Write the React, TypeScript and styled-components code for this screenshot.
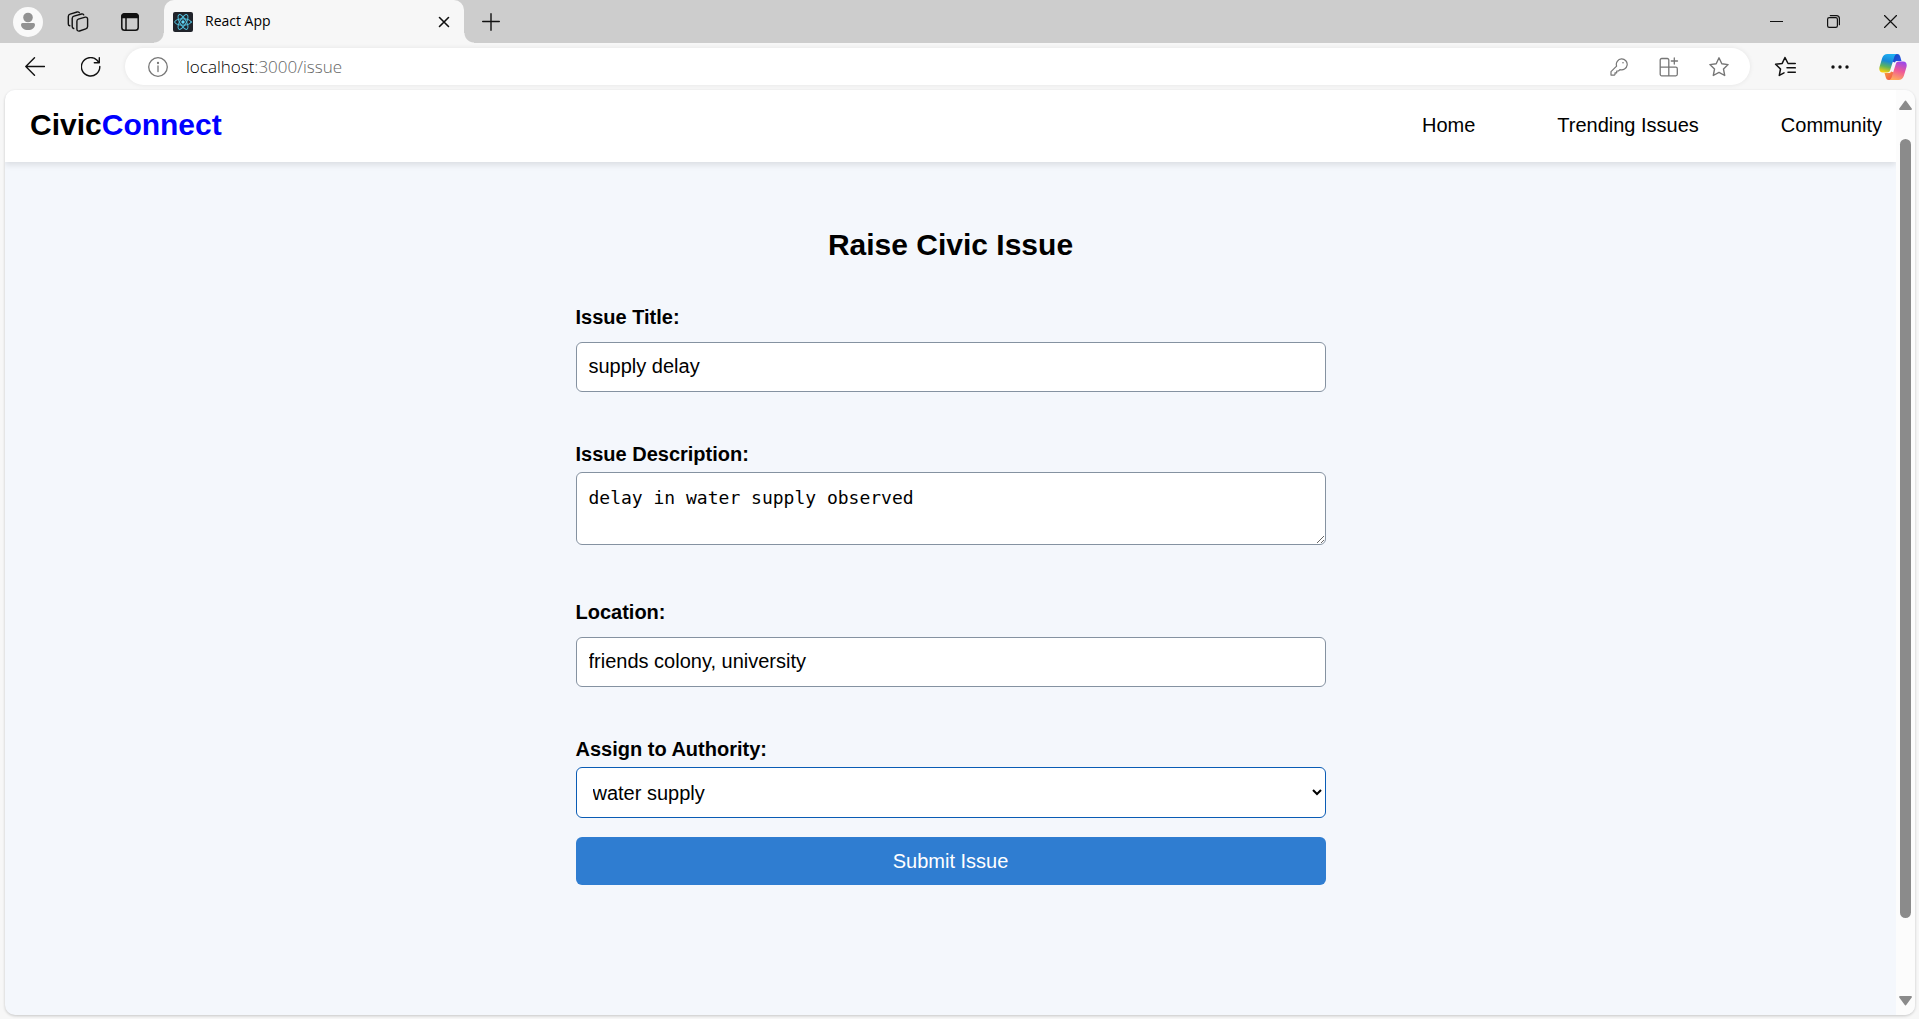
import React, { useState } from "react";
import type { ReactNode } from "react";
import styled, { createGlobalStyle } from "styled-components";

const sans = `"Liberation Sans", Arial, sans-serif`;
const ui = `"Segoe UI", "Open Sans", sans-serif`;

const GlobalStyle = createGlobalStyle`
  *, *::before, *::after { box-sizing: border-box; }
  body { margin: 0; background: #f7f7f7; font-family: ${sans}; color: #000; }
  svg { display: block; }
  button { font: inherit; color: inherit; }
`;

const Window = styled.div`
  display: flex;
  flex-direction: column;
  min-height: 100vh;
  background: #f7f7f7;
`;

const TabStrip = styled.div`
  display: flex;
  align-items: center;
  height: 43px;
  background: #cdcdcd;
`;

const IconButton = styled.button<{ $w: number; $h?: number; $color?: string }>`
  display: flex;
  flex: none;
  align-items: center;
  justify-content: center;
  width: ${(p) => p.$w}px;
  height: ${(p) => p.$h ?? 36}px;
  padding: 0;
  border: 0;
  background: none;
  color: ${(p) => p.$color ?? "#111"};
`;

const StripStart = styled.div`
  display: flex;
  align-items: center;
  width: 164px;
  padding-left: 2px;
`;

const Tab = styled.div`
  position: relative;
  display: flex;
  align-items: center;
  width: 300px;
  height: 43px;
  padding: 0 5px 0 9px;
  border-radius: 10px 10px 0 0;
  background: #f7f7f7;

  &::before,
  &::after {
    content: "";
    position: absolute;
    bottom: 0;
    width: 10px;
    height: 10px;
  }
  &::before {
    right: 100%;
    background: radial-gradient(circle at 0 0, transparent 9px, #f7f7f7 10px);
  }
  &::after {
    left: 100%;
    background: radial-gradient(circle at 100% 0, transparent 9px, #f7f7f7 10px);
  }
`;

const TabTitle = styled.span`
  flex: 1;
  padding: 0 0 2px 12px;
  font: 14px/20px ${ui};
`;

const WindowControls = styled.div`
  display: flex;
  margin-left: auto;
`;

const Toolbar = styled.div`
  display: flex;
  align-items: center;
  height: 47px;
  padding: 0 0 0 7px;
`;

const AddressBar = styled.form`
  display: flex;
  flex: 1;
  align-items: center;
  height: 37px;
  margin: 0 7px;
  padding: 0 6px 0 16px;
  border-radius: 19px;
  background: #fff;
  box-shadow: 0 0 5px rgba(0, 0, 0, 0.08);
`;

const Url = styled.a`
  flex: 1;
  padding-left: 12px;
  color: #666;
  font: 300 17px/24px ${ui};
  text-decoration: none;

  b {
    color: #000;
    font-weight: 300;
  }
`;

const Viewport = styled.div`
  display: flex;
  flex: 1;
  margin: 0 4px 4px 5px;
  border-radius: 10px;
  overflow: hidden;
  background: #f4f7fc;
  box-shadow: 0 1px 3px rgba(0, 0, 0, 0.2);
`;

const Page = styled.div`
  flex: 1;
`;

const SiteHeader = styled.header`
  display: flex;
  align-items: center;
  justify-content: space-between;
  height: 72px;
  padding: 0 14px 2px 25px;
  background: #fff;
  box-shadow: 0 3px 6px rgba(0, 0, 0, 0.1);
`;

const Brand = styled.a`
  color: #000;
  font: bold 30px/36px ${sans};
  text-decoration: none;

  span {
    color: #00f;
  }
`;

const Nav = styled.nav`
  display: flex;
  gap: 82px;
`;

const NavLink = styled.a`
  color: #000;
  font: 20px/24px ${sans};
  text-decoration: none;
`;

const IssueForm = styled.form`
  display: flex;
  flex-direction: column;
  max-width: 750px;
  margin: 0 auto;
  padding: 65px 0 40px;
`;

const Title = styled.h2`
  margin: 0 0 42px;
  font: bold 30px/36px ${sans};
  text-align: center;
`;

const Field = styled.div<{ $gap: number; $after: number }>`
  display: flex;
  flex-direction: column;
  gap: ${(p) => p.$gap}px;
  margin-bottom: ${(p) => p.$after}px;
`;

const Label = styled.label`
  font: bold 20px/24px ${sans};
`;

const control = `
  width: 100%;
  margin: 0;
  border: 1px solid #8592a1;
  border-radius: 6px;
  outline: none;
  background: #fff;
  color: #000;
`;

const Input = styled.input`
  ${control}
  height: 50px;
  padding: 0 12px 2px;
  font: 20px/24px ${sans};
`;

const TextArea = styled.textarea`
  ${control}
  height: 73px;
  padding: 13px 12px 11px;
  font: 18px/24px "DejaVu Sans Mono", monospace;
  resize: vertical;
`;

const Select = styled.select`
  ${control}
  height: 51px;
  padding: 0 12px;
  border-color: #0a5cb5;
  font: 20px/24px ${sans};
`;

const Submit = styled.button`
  height: 48px;
  border: 0;
  border-radius: 6px;
  background: #2f7dd1;
  color: #fff;
  font: 20px/24px ${sans};
`;

const ScrollTrack = styled.div`
  display: flex;
  flex-direction: column;
  align-items: center;
  width: 19px;
  background: #fcfcfc;
`;

const ScrollThumb = styled.div`
  flex: 779;
  width: 11px;
  margin-top: 20px;
  border-radius: 6px;
  background: #8b8b8b;
`;

const ScrollRest = styled.div`
  flex: 68;
`;

type IconProps = { size: number; box?: number; stroke?: number; children: ReactNode };

const Icon = ({ size, box = size, stroke = 1.4, children }: IconProps) => (
  <svg
    width={size}
    height={size}
    viewBox={`0 0 ${box} ${box}`}
    fill="none"
    stroke="currentColor"
    strokeWidth={stroke}
    strokeLinecap="round"
    strokeLinejoin="round"
    aria-hidden="true"
  >
    {children}
  </svg>
);

const STAR = "M11 1.8l2.8 5.9 6.3.9-4.6 4.5 1.2 6.4-5.7-3.1-5.7 3.1 1.2-6.4L1.9 8.6l6.3-.9z";

const ReactLogo = () => (
  <Icon size={20} stroke={1}>
    <rect width="20" height="20" rx="2" fill="#20232a" stroke="none" />
    <g stroke="#53c1de">
      <ellipse cx="10" cy="10" rx="8.3" ry="3.2" />
      <ellipse cx="10" cy="10" rx="8.3" ry="3.2" transform="rotate(60 10 10)" />
      <ellipse cx="10" cy="10" rx="8.3" ry="3.2" transform="rotate(120 10 10)" />
    </g>
    <circle cx="10" cy="10" r="1.7" fill="#61dafb" stroke="none" />
  </Icon>
);

const CopilotLogo = () => (
  <svg width="28" height="26" viewBox="0 0 28 26" aria-hidden="true">
    <defs>
      <linearGradient id="cpLeft" x1="0.6" y1="0" x2="0.35" y2="1">
        <stop offset="0" stopColor="#1fb0f2" />
        <stop offset="0.4" stopColor="#1789d8" />
        <stop offset="0.7" stopColor="#5fb45b" />
        <stop offset="1" stopColor="#f8cf0c" />
      </linearGradient>
      <linearGradient id="cpRight" x1="0.7" y1="0" x2="0.4" y2="1">
        <stop offset="0" stopColor="#9a48ea" />
        <stop offset="0.5" stopColor="#ef5a98" />
        <stop offset="1" stopColor="#ffab5c" />
      </linearGradient>
      <linearGradient id="cpTop" x1="0" y1="0" x2="1" y2="0.6">
        <stop offset="0" stopColor="#1746bd" />
        <stop offset="1" stopColor="#2455e0" />
      </linearGradient>
      <linearGradient id="cpBottom" x1="0" y1="0" x2="1" y2="1">
        <stop offset="0" stopColor="#f9a03c" />
        <stop offset="1" stopColor="#ee4b4b" />
      </linearGradient>
    </defs>
    <path d="M13 7.500L15.500 0h2.700c1.700 0 2.400.8 3 2.500L22.500 7H18.500c-1.500 0-2 .2-2.600 1.500z" fill="url(#cpTop)" />
    <path d="M15 18.500L12.500 26H9.800c-1.700 0-2.400-.8-3-2.500L5.500 19H9.500c1.500 0 2-.2 2.600-1.500z" fill="url(#cpBottom)" />
    <path d="M8.500 0h9.800c-1.700.2-2.400 1.200-3 3L11.200 16c-.6 1.800-1.500 2.500-3.200 2.500H4C.8 18.500-.2 16 .5 13L3.200 4C4.200 1.200 5.800 0 8.500 0z" fill="url(#cpLeft)" />
    <path d="M19.500 26H9.700c1.700-.2 2.400-1.200 3-3L16.800 10c.6-1.800 1.500-2.500 3.200-2.500H24c3.200 0 4.200 2.500 3.500 5.500L24.800 22c-1 2.800-2.600 4-5.300 4z" fill="url(#cpRight)" />
  </svg>
);

const TabStripBar = () => (
  <TabStrip>
    <StripStart>
      <IconButton $w={52} aria-label="Profile">
        <Icon size={30} stroke={0}>
          <circle cx="15" cy="15" r="15" fill="#f9f9f9" />
          <circle cx="15" cy="10.500" r="4.800" fill="#929292" />
          <path d="M9.500 16h11a1.500 1.500 0 0 1 1.500 1.500C22 21 19 23 15 23s-7-2-7-5.500A1.500 1.500 0 0 1 9.500 16z" fill="#929292" />
        </Icon>
      </IconButton>
      <IconButton $w={48} aria-label="Workspaces">
        <Icon size={22}>
          <path d="M11.300 8.200l7-2a1.800 1.800 0 0 1 2.300 1.800v7.500a2.500 2.500 0 0 1-1.800 2.300l-6.300 2.200a1.900 1.900 0 0 1-2.600-1.800V10.500a2.300 2.300 0 0 1 1.400-2.300z" />
          <path d="M6.700 17.500a2 2 0 0 1-1.500-2V7.500a2.500 2.500 0 0 1 1.800-2.300l7.500-2.200a2 2 0 0 1 2.200.8" />
          <path d="M2.800 14.800a2 2 0 0 1-1.500-2V5.500a2.500 2.500 0 0 1 1.800-2.300l7-2.200a2 2 0 0 1 2.200.7" />
        </Icon>
      </IconButton>
      <IconButton $w={56} aria-label="Tab actions">
        <Icon size={18} stroke={1.5}>
          <rect x="0.800" y="0.800" width="16.400" height="16.400" rx="2.800" />
          <path d="M1 4.500V3.500A2.500 2.500 0 0 1 3.500 1h11A2.500 2.500 0 0 1 17 3.500V4.500z" fill="currentColor" />
          <path d="M5 5v12" />
        </Icon>
      </IconButton>
    </StripStart>
    <Tab>
      <ReactLogo />
      <TabTitle>React App</TabTitle>
      <IconButton $w={30} aria-label="Close tab">
        <Icon size={12} stroke={1.6}>
          <path d="M1.500 1.500l9 9m0-9l-9 9" />
        </Icon>
      </IconButton>
    </Tab>
    <IconButton $w={53} aria-label="New tab">
      <Icon size={18}>
        <path d="M.7 8.500h16.600M9 .7v16.600" />
      </Icon>
    </IconButton>
    <WindowControls>
      <IconButton $w={57} aria-label="Minimize">
        <Icon size={13} stroke={1}>
          <path d="M0 6.500h13" />
        </Icon>
      </IconButton>
      <IconButton $w={57} aria-label="Restore">
        <Icon size={13} stroke={1.2}>
          <rect x="0.600" y="2.600" width="9.800" height="9.800" rx="1.600" />
          <path d="M3.300.6h6.100a3 3 0 0 1 3 3v6.100" />
        </Icon>
      </IconButton>
      <IconButton $w={57} aria-label="Close window">
        <Icon size={13} stroke={1.2}>
          <path d="M.5.5l12 12m0-12L.5 12.500" />
        </Icon>
      </IconButton>
    </WindowControls>
  </TabStrip>
);

const NavigationBar = () => (
  <Toolbar>
    <IconButton $w={56} aria-label="Back">
      <Icon size={20}>
        <path d="M19.500 9.500H.8M9.500 .8L.8 9.500l8.700 8.700" />
      </Icon>
    </IconButton>
    <IconButton $w={55} aria-label="Refresh">
      <Icon size={20}>
        <path d="M18.800 9.500A9.200 9.200 0 1 1 15.800 3L18 5.500M18.300.7v5h-5" />
      </Icon>
    </IconButton>
    <AddressBar onSubmit={(e) => e.preventDefault()}>
      <IconButton $w={33} $color="#767676" type="button" aria-label="View site information">
        <Icon size={20} stroke={1.300}>
          <circle cx="10" cy="10" r="9.300" />
          <path d="M10 9v5.500" />
          <circle cx="10" cy="6" r="0.500" fill="currentColor" />
        </Icon>
      </IconButton>
      <Url href="#issue">
        <b>localhost</b>:3000/issue
      </Url>
      <IconButton $w={50} $color="#767676" type="button" aria-label="Saved passwords">
        <Icon size={18} stroke={1.200}>
          <path d="M11.500.9a5.500 5.500 0 1 1-1.600 10.700L8.500 13H6.700v1.800H5V16.500l-.6.6H1V13.600l5.600-5.500A5.500 5.500 0 0 1 11.500.9z" />
          <circle cx="13" cy="4.800" r="0.800" fill="currentColor" stroke="none" />
        </Icon>
      </IconButton>
      <IconButton $w={50} $color="#767676" type="button" aria-label="Install app">
        <Icon size={20} stroke={1.300}>
          <path d="M1.200 3a1.500 1.500 0 0 1 1.500-1.500h5.600a1.500 1.500 0 0 1 1.500 1.500v15.800H2.700a1.500 1.500 0 0 1-1.500-1.500zM1.200 10.200h15.600a1.500 1.500 0 0 1 1.500 1.500v5.600a1.500 1.500 0 0 1-1.500 1.500H9.800M15.300 1v6M12.300 4h6.200" />
        </Icon>
      </IconButton>
      <IconButton $w={50} $color="#767676" type="button" aria-label="Add to favorites">
        <Icon size={22}>
          <path d={STAR} />
        </Icon>
      </IconButton>
    </AddressBar>
    <IconButton $w={56} aria-label="Favorites">
      <Icon size={22} stroke={1.500}>
        <path d="M13.500 6.500L11 1.500 8.200 7.400l-6.600.9 4.900 4.700-1.200 6.400 4.700-2.600M14 7.500h7.300M13 11.800H21.300M14 16.200H21.300" />
      </Icon>
    </IconButton>
    <IconButton $w={54} aria-label="Settings and more">
      <Icon size={18} stroke={0}>
        <circle cx="2" cy="9" r="1.700" fill="currentColor" />
        <circle cx="9" cy="9" r="1.700" fill="currentColor" />
        <circle cx="16" cy="9" r="1.700" fill="currentColor" />
      </Icon>
    </IconButton>
    <IconButton $w={52} aria-label="Copilot">
      <CopilotLogo />
    </IconButton>
  </Toolbar>
);

const Scrollbar = () => (
  <ScrollTrack>
    <IconButton $w={19} $h={29} $color="#8b8b8b" aria-label="Scroll up">
      <svg width="13" height="10" viewBox="0 0 13 10" aria-hidden="true">
        <path d="M6.500 1.500L12 9H1z" fill="currentColor" stroke="currentColor" strokeWidth="1.800" strokeLinejoin="round" />
      </svg>
    </IconButton>
    <ScrollThumb />
    <ScrollRest />
    <IconButton $w={19} $h={29} $color="#8b8b8b" aria-label="Scroll down">
      <svg width="13" height="10" viewBox="0 0 13 10" aria-hidden="true">
        <path d="M6.500 8.500L12 1H1z" fill="currentColor" stroke="currentColor" strokeWidth="1.800" strokeLinejoin="round" />
      </svg>
    </IconButton>
  </ScrollTrack>
);

export default function App() {
  const [title, setTitle] = useState("supply delay");
  const [description, setDescription] = useState("delay in water supply observed");
  const [location, setLocation] = useState("friends colony, university");
  const [authority, setAuthority] = useState("water supply");

  return (
    <Window>
      <GlobalStyle />
      <TabStripBar />
      <NavigationBar />
      <Viewport>
        <Page>
          <SiteHeader>
            <Brand href="#home">
              Civic<span>Connect</span>
            </Brand>
            <Nav>
              <NavLink href="#home">Home</NavLink>
              <NavLink href="#trending">Trending Issues</NavLink>
              <NavLink href="#community">Community</NavLink>
            </Nav>
          </SiteHeader>
          <IssueForm onSubmit={(e) => e.preventDefault()}>
            <Title>Raise Civic Issue</Title>
            <Field $gap={13} $after={50}>
              <Label htmlFor="title">Issue Title:</Label>
              <Input id="title" value={title} onChange={(e) => setTitle(e.target.value)} />
            </Field>
            <Field $gap={6} $after={55}>
              <Label htmlFor="description">Issue Description:</Label>
              <TextArea id="description" value={description} onChange={(e) => setDescription(e.target.value)} />
            </Field>
            <Field $gap={13} $after={50}>
              <Label htmlFor="location">Location:</Label>
              <Input id="location" value={location} onChange={(e) => setLocation(e.target.value)} />
            </Field>
            <Field $gap={6} $after={19}>
              <Label htmlFor="authority">Assign to Authority:</Label>
              <Select id="authority" value={authority} onChange={(e) => setAuthority(e.target.value)}>
                <option>water supply</option>
              </Select>
            </Field>
            <Submit type="submit">Submit Issue</Submit>
          </IssueForm>
        </Page>
        <Scrollbar />
      </Viewport>
    </Window>
  );
}
